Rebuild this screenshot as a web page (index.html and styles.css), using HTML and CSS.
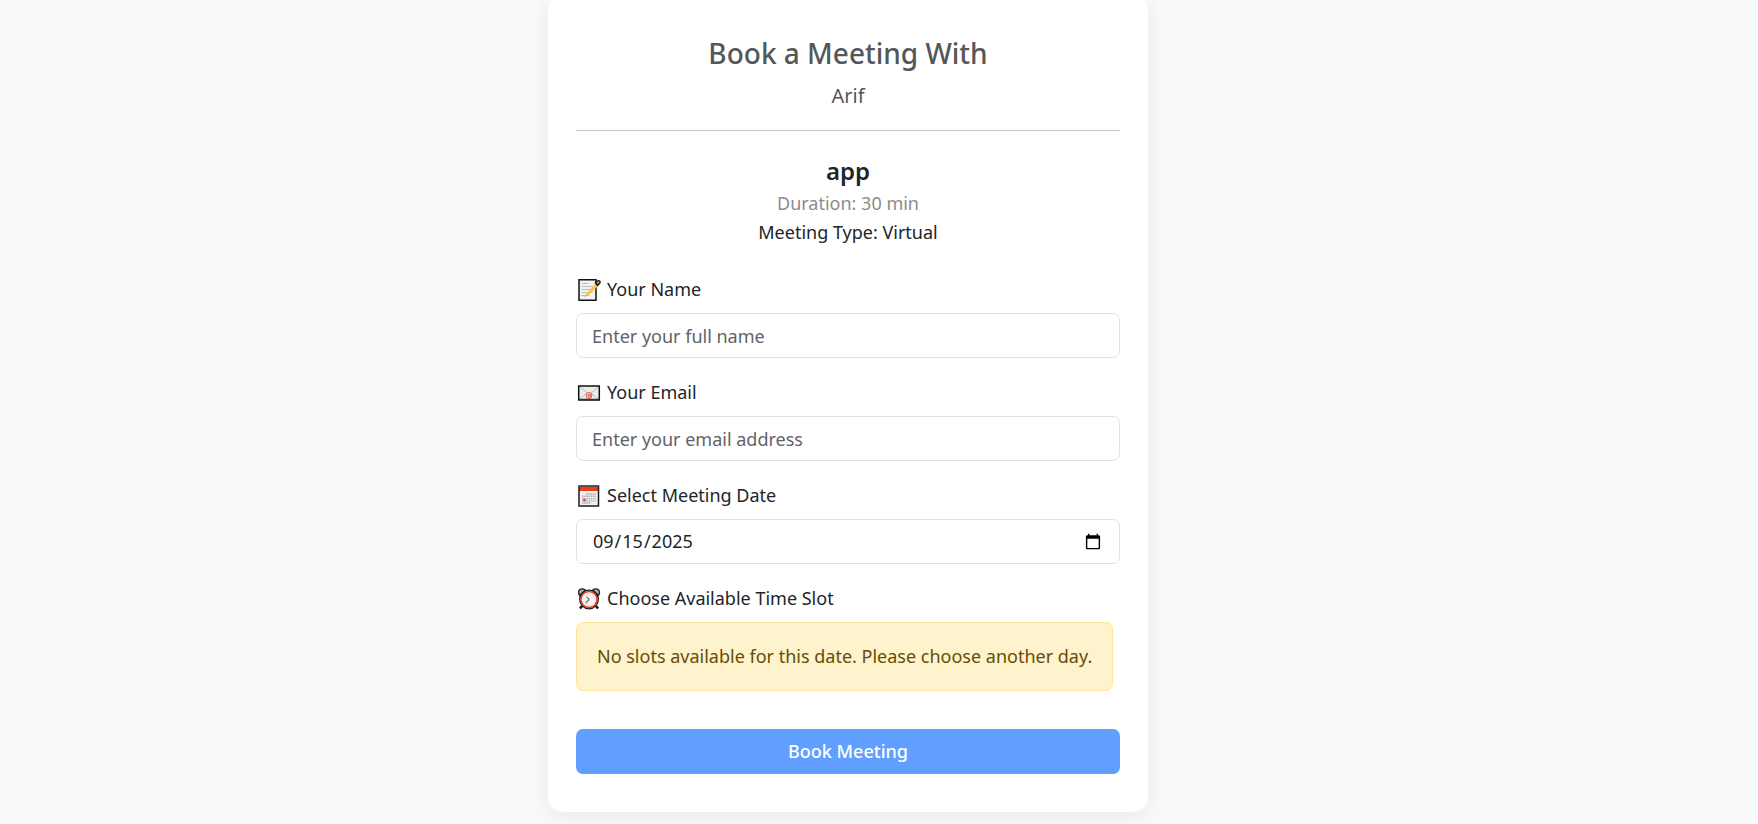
FILE: index.html
```html
<!DOCTYPE html>
<html lang="en">
<head>
  <meta charset="UTF-8">
  <meta name="viewport" content="width=device-width, initial-scale=1.0">
  <title>Book a Meeting</title>
  <link rel="stylesheet" href="styles.css">
</head>
<body>

  <main class="booking-card">
    <header class="booking-header">
      <h1 class="booking-title">Book a Meeting With</h1>
      <p class="booking-host">Arif</p>
    </header>

    <hr class="divider">

    <!-- Meeting details -->
    <section class="meeting-info">
      <h2 class="meeting-name">app</h2>
      <p class="meeting-duration">Duration: 30 min</p>
      <p class="meeting-type">Meeting Type: Virtual</p>
    </section>

    <!-- Booking form -->
    <form>
      <div class="form-group">
        <label class="form-label" for="name">
          <svg class="label-icon" viewBox="0 0 24 24" aria-hidden="true">
            <path d="M2 1.7h17v20.6H2z" fill="#f2f2f2" stroke="#111" stroke-width="1.5"/>
            <path d="M4.5 5.5h7M4.5 8.5h11M4.5 11.5h11M4.5 14.5h11M4.5 17.5h8" stroke="#b9bcc4" stroke-width="1"/>
            <path d="M8 18.5l2-4L19.5 4.500l2.500 2.500-9.500 9.500z" fill="#fbc93d"/>
            <path d="M7 19l1.200-2.700 1.500 1.500z" fill="#e6a98b"/>
            <path d="M18.500 5l2-2q1.500-.8 2.300.2t-.3 2.300L20.500 7.500z" fill="#c99a9a" stroke="#111" stroke-width="1.300"/>
          </svg>
          Your Name
        </label>
        <input class="form-control" type="text" id="name" placeholder="Enter your full name">
      </div>

      <div class="form-group">
        <label class="form-label" for="email">
          <svg class="label-icon" viewBox="0 0 24 24" aria-hidden="true">
            <path d="M1.700 5h20.600v14H1.700z" fill="#ececec" stroke="#111" stroke-width="1.500"/>
            <path d="M3 6l9 7.500L21 6M3 18l6.500-6M21 18l-6.500-6" fill="none" stroke="#bdbdbd" stroke-width="1"/>
            <circle cx="12" cy="14.500" r="2.900" fill="#f7c9c1" stroke="#ee5a43" stroke-width="1"/>
            <circle cx="12" cy="14.500" r="1" fill="#ee3f25"/>
            <path d="M13 13.300v1.500q.8 1 1.700 0" fill="none" stroke="#ee3f25" stroke-width=".8"/>
            <path d="M2 18.500h20" stroke="#333" stroke-width="1.500"/>
          </svg>
          Your Email
        </label>
        <input class="form-control" type="email" id="email" placeholder="Enter your email address">
      </div>

      <div class="form-group">
        <label class="form-label" for="date">
          <svg class="label-icon" viewBox="0 0 24 24" aria-hidden="true">
            <path d="M2 2h19.500v20H2z" fill="#f1f1f1"/>
            <path d="M2 3h19.500v4H2z" fill="#ee3a16"/>
            <path d="M9 10h10M5 12.300h14M5 14.600h14M5 16.900h14M5 19h9" stroke="#a9a9a9" stroke-width="1.400" stroke-dasharray="1.500 .7"/>
            <circle cx="7.500" cy="16" r="1.600" fill="#f0593c"/>
            <path d="M2 2h19.500v20H2z" fill="none" stroke="#1b1b1b" stroke-width="1.500"/>
            <path d="M2 2h19.500" stroke="#555" stroke-width="1.500"/>
          </svg>
          Select Meeting Date
        </label>
        <input class="form-control" type="date" id="date" value="2025-09-15">
      </div>

      <div class="form-group" role="group" aria-labelledby="slot-label">
        <div class="form-label" id="slot-label">
          <svg class="label-icon" viewBox="0 0 24 24" aria-hidden="true">
            <path d="M5 19l-2 2.500M19 19l2 2.500" stroke="#111" stroke-width="2.500"/>
            <path d="M2.500 8.500Q.5 5 2.500 2.800 5 .8 8.500 3zM21.500 8.500q2-3.500 0-5.700Q19 .8 15.500 3z" fill="#aaa" stroke="#222" stroke-width="1.300"/>
            <circle cx="12" cy="12.500" r="9.300" fill="#f5f5f5" stroke="#1b1b1b" stroke-width="1.300"/>
            <circle cx="12" cy="12.500" r="8" fill="#f5f5f5" stroke="#e8371b" stroke-width="1.500"/>
            <circle cx="12" cy="12.500" r="6" fill="none" stroke="#bbb" stroke-width=".8" stroke-dasharray="1 2.140"/>
            <path d="M9.500 10l2.700 2.500-3.700 3.500" fill="none" stroke="#222" stroke-width="1"/>
          </svg>
          Choose Available Time Slot
        </div>
        <div class="alert">No slots available for this date. Please choose another day.</div>
      </div>

      <button class="btn-book" type="submit" disabled>Book Meeting</button>
    </form>
  </main>

</body>
</html>
```
FILE: styles.css
```css
* {
  box-sizing: border-box;
}

body {
  margin: 0;
  padding-right: 62px;
  font-family: "Segoe UI", "Noto Sans", sans-serif;
  font-size: 18px;
  line-height: 29px;
  color: #212529;
  background-color: #f8fafc;
  overflow: hidden;
}

h1, h2, p {
  margin: 0;
}

.booking-card {
  max-width: 600px;
  margin: -6px auto 40px;
  padding: 40px 28px 38px;
  background-color: #fff;
  border-radius: 15px;
  box-shadow: 0 4px 24px rgba(0, 0, 0, 0.08);
}

.booking-header,
.meeting-info {
  text-align: center;
}

.booking-title {
  margin-bottom: 8px;
  font-size: 28px;
  font-weight: 500;
  line-height: 38px;
  color: #555759;
}

.booking-host {
  font-size: 20px;
  line-height: 32px;
  color: #555759;
}

.divider {
  height: 1px;
  margin: 18px 0 25px;
  border: 0;
  background-color: #c4c5c6;
}

.meeting-info {
  margin-bottom: 28px;
}

.meeting-name {
  margin-bottom: 3px;
  font-size: 24px;
  font-weight: 600;
  line-height: 30px;
}

.meeting-duration {
  color: #8c8c8c;
}

/* Form */
.form-group {
  margin-bottom: 20px;
}

.form-label {
  display: flex;
  align-items: center;
  gap: 6px;
  margin-bottom: 9px;
}

.label-icon {
  width: 24px;
  height: 24px;
  margin-left: 1px;
}

.form-control {
  display: block;
  width: 100%;
  height: 45px;
  padding: 6px 15px;
  font: inherit;
  color: #212529;
  background-color: #fff;
  border: 1px solid #dee2e6;
  border-radius: 7px;
}

.form-control::placeholder {
  color: #5f6368;
  opacity: 1;
}

.alert {
  width: fit-content;
  padding: 19px 20px;
  color: #664d03;
  background-color: #fff3cd;
  border: 1px solid #ffe69c;
  border-radius: 7px;
}

.btn-book {
  display: block;
  width: 100%;
  height: 45px;
  margin-top: 38px;
  font: inherit;
  font-weight: 500;
  color: #fff;
  background-color: #609fff;
  border: 0;
  border-radius: 7px;
}
```
